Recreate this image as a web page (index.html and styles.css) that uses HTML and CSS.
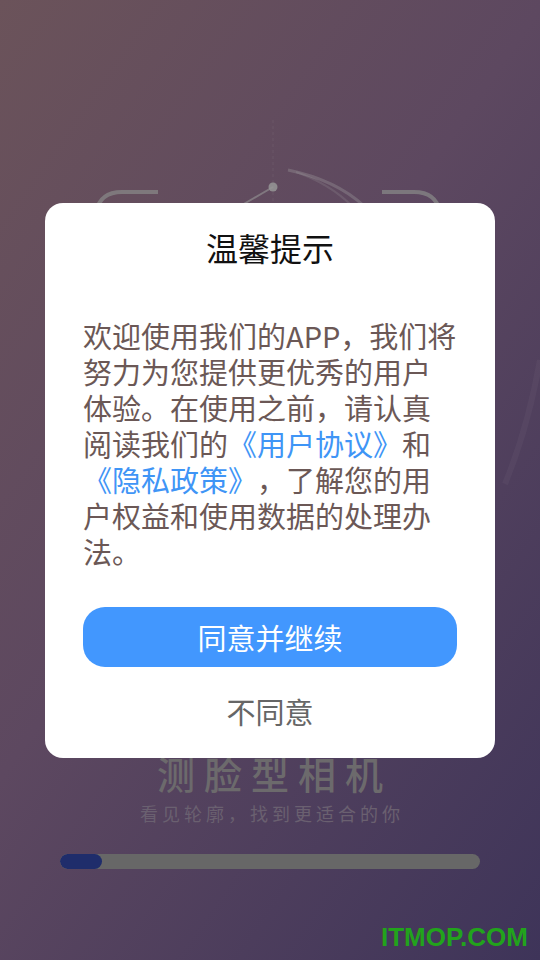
FILE: index.html
```html
<!DOCTYPE html>
<html lang="zh-CN">
<head>
    <meta charset="UTF-8">
    <meta name="viewport" content="width=device-width, initial-scale=1.0">
    <title>测脸型相机</title>
    <link rel="stylesheet" href="styles.css">
</head>
<body>
    <div class="screen">
        <section class="splash">
            <svg class="face-frame" width="540" height="750" viewBox="0 0 540 750">
                <line x1="273" y1="120" x2="273" y2="205" stroke="rgba(170,170,170,0.12)" stroke-width="1" stroke-dasharray="3 3"/>
                <path d="M158 192 H122 Q100 192 96 212" fill="none" stroke="rgba(135,135,135,0.75)" stroke-width="4"/>
                <path d="M382 192 H414 Q436 192 440 212" fill="none" stroke="rgba(135,135,135,0.75)" stroke-width="4"/>
                <path d="M288 170 Q336 180 364 206" fill="none" stroke="rgba(170,170,170,0.3)" stroke-width="3"/>
                <path d="M296 172 Q330 184 352 206" fill="none" stroke="rgba(170,170,170,0.18)" stroke-width="2"/>
                <line x1="273" y1="187" x2="242" y2="205" stroke="rgba(150,150,150,0.6)" stroke-width="2"/>
                <circle cx="273" cy="187" r="4.5" fill="rgba(150,150,150,0.85)"/>
                <path d="M540 360 Q528 428 505 484" fill="none" stroke="rgba(255,255,255,0.035)" stroke-width="6"/>
            </svg>
            <h2 class="app-name">测脸型相机</h2>
            <p class="app-slogan">看见轮廓，找到更适合的你</p>
            <div class="progress">
                <div class="progress-fill" style="width: 10%"></div>
            </div>
        </section>

        <div class="dialog">
            <h1 class="dialog-title">温馨提示</h1>
            <p class="dialog-text">欢迎使用我们的APP，我们将努力为您提供更优秀的用户体验。在使用之前，请认真阅读我们的<a href="#">《用户协议》</a>和<a href="#">《隐私政策》</a>，了解您的用户权益和使用数据的处理办法。</p>
            <button class="btn-agree" type="button">同意并继续</button>
            <a class="btn-refuse" href="#">不同意</a>
        </div>

        <span class="watermark">ITMOP.COM</span>
    </div>
</body>
</html>
```

FILE: styles.css
```css
body {
    margin: 0;
    padding: 0;
    font-family: "Noto Sans CJK SC", "Noto Sans", sans-serif;
    text-spacing-trim: space-all;
}

.screen {
    position: relative;
    width: 540px;
    height: 960px;
    overflow: hidden;
    background: linear-gradient(125deg, #6b535a 0%, #5d4860 45%, #3e3459 100%);
}

.splash {
    display: flex;
    flex-direction: column;
    align-items: center;
}

.face-frame {
    display: block;
}

.app-name {
    margin: 0;
    font-size: 38px;
    line-height: 46px;
    font-weight: 500;
    letter-spacing: 9px;
    text-indent: 9px;
    color: #6c6a6c;
}

.app-slogan {
    margin: 5px 0 0;
    font-size: 18px;
    line-height: 25px;
    letter-spacing: 4px;
    text-indent: 4px;
    color: #6a6070;
}

.progress {
    margin-top: 28px;
    width: 420px;
    height: 15px;
    border-radius: 8px;
    background-color: #676767;
    overflow: hidden;
}

.progress-fill {
    height: 100%;
    border-radius: 8px;
    background-color: #1f2d6b;
}

.dialog {
    position: absolute;
    left: 45px;
    top: 203px;
    width: 450px;
    box-sizing: border-box;
    padding: 24px 38px 27px;
    background-color: #fff;
    border-radius: 18px;
    display: flex;
    flex-direction: column;
    align-items: stretch;
}

.dialog-title {
    margin: 0;
    font-size: 32px;
    line-height: 40px;
    font-weight: 400;
    text-align: center;
    color: #111;
}

.dialog-text {
    margin: 50px 0 0;
    font-size: 29px;
    line-height: 36px;
    color: #6b5856;
    text-spacing-trim: space-all;
}

.dialog-text a {
    color: #3f95f6;
    text-decoration: none;
}

.btn-agree {
    margin-top: 38px;
    height: 60px;
    border: none;
    border-radius: 22px;
    background-color: #4297fe;
    color: #fff;
    font-family: inherit;
    font-size: 29px;
    cursor: pointer;
}

.btn-refuse {
    margin-top: 24px;
    font-size: 29px;
    line-height: 40px;
    text-align: center;
    color: #666;
    text-decoration: none;
}

.watermark {
    position: absolute;
    left: 381px;
    top: 921px;
    font-family: "Liberation Sans", Arial, sans-serif;
    font-size: 26px;
    font-weight: bold;
    line-height: 32px;
    color: #22a31c;
}
```
